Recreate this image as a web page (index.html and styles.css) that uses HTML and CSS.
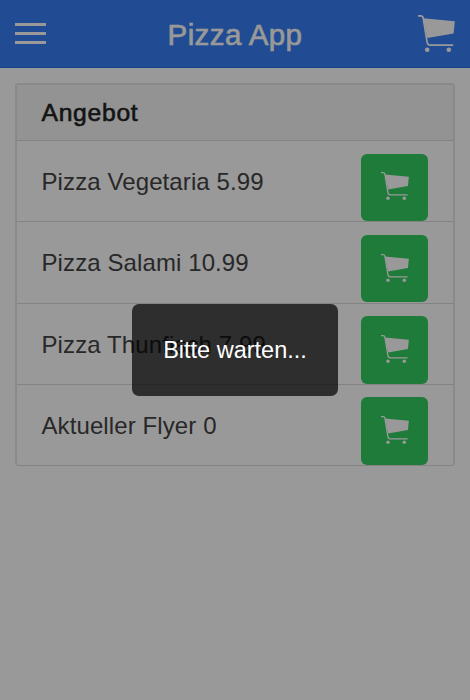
FILE: index.html
```html
<!DOCTYPE html>
<html lang="de">
<head>
<meta charset="utf-8">
<title>Pizza App</title>
<link rel="stylesheet" href="styles.css">
</head>
<body>
<svg class="defs" aria-hidden="true">
  <symbol id="cart" viewBox="0 0 37 37">
    <path d="M5.2 3.3 36.8 6.2 35.6 18.4 9.4 23.1Z" fill="currentColor"/>
    <path d="M0 .9H2.8Q4.8 1 5.2 3.2L9 26.6Q9.6 30.1 12 30.1H35.2" fill="none" stroke="currentColor" stroke-width="1.7"/>
    <circle cx="9.2" cy="34.7" r="2.3" fill="currentColor"/>
    <circle cx="30.8" cy="34.7" r="2.3" fill="currentColor"/>
  </symbol>
</svg>
<header class="bar">
  <button class="menu" aria-label="Menü"><span></span><span></span><span></span></button>
  <h1 class="title">Pizza App</h1>
  <button class="basket" aria-label="Warenkorb"><svg><use href="#cart"/></svg></button>
</header>
<main class="content">
  <section class="card">
    <h2 class="divider">Angebot</h2>
    <div class="item"><span class="name">Pizza Vegetaria 5.99</span><button class="add"><svg><use href="#cart"/></svg></button></div>
    <div class="item"><span class="name">Pizza Salami 10.99</span><button class="add"><svg><use href="#cart"/></svg></button></div>
    <div class="item"><span class="name">Pizza Thunfisch 7.99</span><button class="add"><svg><use href="#cart"/></svg></button></div>
    <div class="item"><span class="name">Aktueller Flyer 0</span><button class="add"><svg><use href="#cart"/></svg></button></div>
  </section>
</main>
<div class="backdrop"><div class="loading">Bitte warten...</div></div>
</body>
</html>
```
FILE: styles.css
```css
* { box-sizing: border-box; }
body {
  margin: 0;
  height: 700px;
  overflow: hidden;
  background: #fff;
  color: #444;
  font-family: "Liberation Sans", Arial, sans-serif;
  font-size: 23.5px;
}
button { border: 0; padding: 0; background: none; color: #fff; }
.defs { display: none; }
.bar {
  height: 68px;
  padding: 0 15px;
  display: flex;
  align-items: center;
  justify-content: space-between;
  background: #387ef5;
  border-bottom: 1px solid #2a70ea;
  color: #fff;
}
.menu { width: 37px; display: grid; gap: 6px; }
.menu span { width: 31px; height: 3px; background: #fff; }
.title {
  margin: 2px 0 0;
  font-size: 29.5px;
  font-weight: 400;
  letter-spacing: 0.4px;
  -webkit-text-stroke: 0.6px currentColor;
}
.basket svg { display: block; width: 37px; height: 37px; }
.content { padding: 15px; }
.card {
  border: 2px solid #e4e4e4;
  border-bottom: 1px solid #dadada;
  border-radius: 4px;
  width: 440px;
}
.divider {
  margin: 0;
  height: 55px;
  padding-left: 24.5px;
  font-size: 24.7px;
  line-height: 55px;
  font-weight: 400;
  letter-spacing: 0.7px;
  -webkit-text-stroke: 0.6px currentColor;
  color: #222;
  background: #f5f5f5;
}
.item {
  height: 81.25px;
  padding: 0 25px 0 24.5px;
  display: flex;
  justify-content: space-between;
  border-top: 1px solid #dadada;
}
.name { line-height: 82.5px; white-space: nowrap; font-size: 24px; letter-spacing: 0.1px; }
.add {
  width: 67.5px;
  height: 67.5px;
  margin-top: 12.6px;
  padding: 0 0 2px 1px;
  border-radius: 6px;
  background: #33cd5f;
  display: grid;
  place-items: center;
}
.add svg { width: 28px; height: 28px; }
.backdrop {
  position: absolute;
  inset: 0;
  display: grid;
  place-items: center;
  background: rgba(0, 0, 0, 0.4);
}
.loading {
  width: 206px;
  height: 92px;
  border-radius: 7px;
  background: rgba(0, 0, 0, 0.7);
  color: #fff;
  text-align: center;
  line-height: 92px;
}
```
